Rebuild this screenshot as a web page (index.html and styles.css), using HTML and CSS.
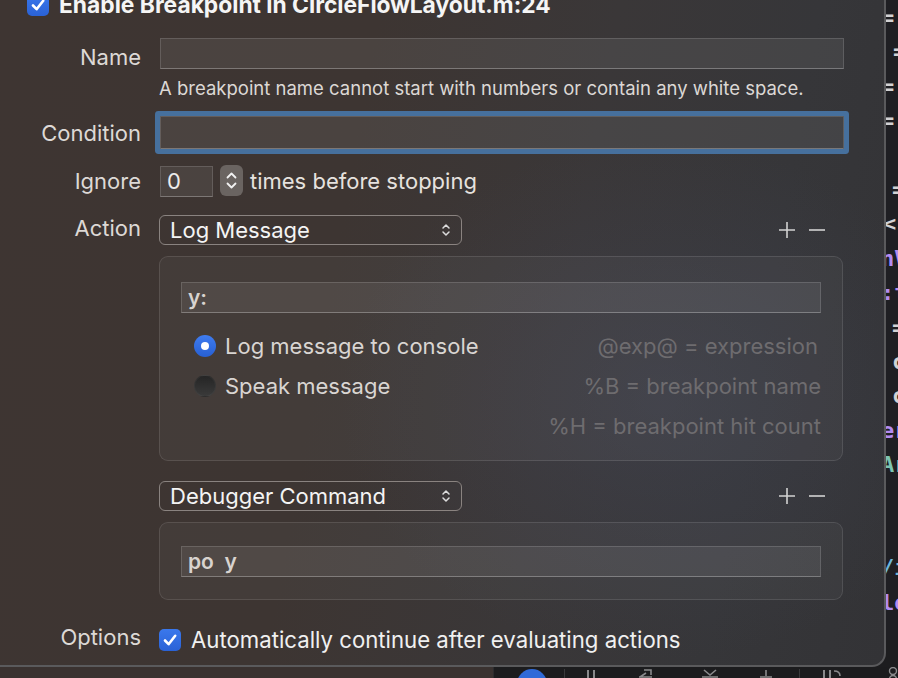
FILE: index.html
```html
<!DOCTYPE html>
<html>
<head>
<meta charset="utf-8">
<link rel="stylesheet" href="styles.css">
</head>
<body>
<div class="screen">
  <div class="main">
    <section class="panel">
      <div class="title-row">
        <span class="checkbox"><svg viewBox="0 0 22 22" width="22" height="22"><path d="M6 11.5 L9.6 15.2 L16.2 6.8" fill="none" stroke="#fff" stroke-width="2.6" stroke-linecap="round" stroke-linejoin="round"/></svg></span>
        <span class="title">Enable Breakpoint in CircleFlowLayout.m:24</span>
      </div>

      <div class="row row-name">
        <div class="label label-name">Name</div>
        <div class="ctrl">
          <div class="field"></div>
          <div class="help">A breakpoint name cannot start with numbers or contain any white space.</div>
        </div>
      </div>

      <div class="row row-condition">
        <div class="label label-condition">Condition</div>
        <div class="ctrl">
          <div class="field field-focus"></div>
        </div>
      </div>

      <div class="row row-ignore">
        <div class="label">Ignore</div>
        <div class="ctrl ctrl-inline">
          <div class="field field-small">0</div>
          <div class="stepper"><svg viewBox="0 0 23 31" width="23" height="31"><path d="M7.5 12.5 L11.5 8.5 L15.5 12.5 M7.5 18.5 L11.5 22.5 L15.5 18.5" fill="none" stroke="#f2f2f2" stroke-width="1.8" stroke-linecap="round" stroke-linejoin="round"/></svg></div>
          <span class="text">times before stopping</span>
        </div>
      </div>

      <div class="row row-action">
        <div class="label label-action">Action</div>
        <div class="ctrl">
          <div class="action-head">
            <div class="popup"><span>Log Message</span><svg viewBox="0 0 10 18" width="10" height="18"><path d="M2 7 L5 4 L8 7 M2 11 L5 14 L8 11" fill="none" stroke="#dcdcdc" stroke-width="1.5" stroke-linecap="round" stroke-linejoin="round"/></svg></div>
            <div class="pm">
              <svg viewBox="0 0 18 18" width="18" height="18"><path d="M9 1 V17 M1 9 H17" stroke="#d2d2d2" stroke-width="1.6"/></svg>
              <svg viewBox="0 0 18 18" width="18" height="18"><path d="M1 9 H17" stroke="#d2d2d2" stroke-width="1.6"/></svg>
            </div>
          </div>

          <div class="group group-log">
            <div class="field field-inner"><span class="code">y:</span></div>
            <div class="opts">
              <div class="opt-row">
                <span class="radio radio-on"><span class="dot"></span></span>
                <span class="opt-text">Log message to console</span>
                <span class="hint hint-a">@exp@ = expression</span>
              </div>
              <div class="opt-row">
                <span class="radio radio-off"></span>
                <span class="opt-text">Speak message</span>
                <span class="hint">%B = breakpoint name</span>
              </div>
              <div class="opt-row">
                <span class="hint">%H = breakpoint hit count</span>
              </div>
            </div>
          </div>

          <div class="action-head action-head-2">
            <div class="popup"><span>Debugger Command</span><svg viewBox="0 0 10 18" width="10" height="18"><path d="M2 7 L5 4 L8 7 M2 11 L5 14 L8 11" fill="none" stroke="#dcdcdc" stroke-width="1.5" stroke-linecap="round" stroke-linejoin="round"/></svg></div>
            <div class="pm">
              <svg viewBox="0 0 18 18" width="18" height="18"><path d="M9 1 V17 M1 9 H17" stroke="#d2d2d2" stroke-width="1.6"/></svg>
              <svg viewBox="0 0 18 18" width="18" height="18"><path d="M1 9 H17" stroke="#d2d2d2" stroke-width="1.6"/></svg>
            </div>
          </div>

          <div class="group group-cmd">
            <div class="field field-inner"><span class="code">po&nbsp;&nbsp;y</span></div>
          </div>
        </div>
      </div>

      <div class="row row-options">
        <div class="label">Options</div>
        <div class="ctrl ctrl-inline ctrl-options">
          <span class="checkbox"><svg viewBox="0 0 22 22" width="22" height="22"><path d="M6 11.5 L9.6 15.2 L16.2 6.8" fill="none" stroke="#fff" stroke-width="2.6" stroke-linecap="round" stroke-linejoin="round"/></svg></span>
          <span class="text text-opt">Automatically continue after evaluating actions</span>
        </div>
      </div>
    </section>

    <div class="editor">
      <div class="ln i0 w">=</div>
      <div class="ln i8 w">=</div>
      <div class="ln i0 w">=</div>
      <div class="ln i0 w">=</div>
      <div class="ln">&nbsp;</div>
      <div class="ln i7 w">=</div>
      <div class="ln i1 w">&lt;</div>
      <div class="ln i0 p">nV</div>
      <div class="ln i0 p">:t</div>
      <div class="ln i7 w">=</div>
      <div class="ln i7 w">c</div>
      <div class="ln i7 w">c</div>
      <div class="ln i0 p">er</div>
      <div class="ln i0 t">Ar</div>
      <div class="ln">&nbsp;</div>
      <div class="ln">&nbsp;</div>
      <div class="ln i0 b">/i</div>
      <div class="ln i0 p">le</div>
    </div>
  </div>

  <div class="toolbar">
    <div class="tb-left"></div>
    <div class="tb-right">
      <svg viewBox="0 0 405 11" width="405" height="11">
        <circle cx="38" cy="17" r="15" fill="#2f6ad8"/>
        <rect x="70" y="2" width="1" height="9" fill="#3a3a3c"/>
        <rect x="93" y="3" width="2" height="8" fill="#8a8a8c"/>
        <rect x="99" y="3" width="2" height="8" fill="#8a8a8c"/>
        <path d="M146 10 L152 6 M150 3 L157 3 L157 8 M145 10 H158" stroke="#8a8a8c" stroke-width="1.6" fill="none"/>
        <path d="M210 3 L216 8 L222 3 M208 10 H224" stroke="#8a8a8c" stroke-width="1.6" fill="none"/>
        <path d="M272 3 V9 M266 10 H278" stroke="#8a8a8c" stroke-width="1.6" fill="none"/>
        <rect x="305" y="2" width="1" height="9" fill="#3a3a3c"/>
        <rect x="329" y="3" width="2" height="8" fill="#8a8a8c"/>
        <rect x="335" y="3" width="2" height="8" fill="#8a8a8c"/>
        <path d="M340 4 Q346 4 346 9" stroke="#8a8a8c" stroke-width="1.6" fill="none"/>
        <circle cx="399" cy="4" r="3.5" stroke="#8a8a8c" stroke-width="1.4" fill="none"/>
        <circle cx="399" cy="12" r="3.5" stroke="#8a8a8c" stroke-width="1.4" fill="none"/>
      </svg>
    </div>
  </div>
</div>
</body>
</html>
```

FILE: styles.css
```css
* { box-sizing: border-box; }
html, body { margin: 0; padding: 0; }
body {
  width: 898px;
  height: 678px;
  overflow: hidden;
  background: #1d1d1f;
  font-family: Inter, "Noto Sans", sans-serif;
}
.screen {
  width: 898px;
  height: 678px;
  overflow: hidden;
  display: flex;
  flex-direction: column;
}
.main {
  display: flex;
  height: 667px;
  flex: none;
  background: #1d1d1f;
}
.panel {
  width: 886px;
  height: 667px;
  flex: none;
  border-right: 2px solid #5a5a5c;
  border-bottom: 2px solid #5a5a5c;
  border-bottom-right-radius: 14px;
  overflow: hidden;
  background:
    radial-gradient(ellipse 320px 260px at 660px 400px, rgba(70, 75, 95, 0.35), rgba(70, 75, 95, 0) 100%),
    linear-gradient(100deg, #3e3532 0%, #3d3532 38%, #3a3738 62%, #363639 82%, #333336 100%);
}

/* title */
.title-row {
  display: flex;
  align-items: center;
  gap: 10px;
  height: 22px;
  margin-top: -6px;
  padding-left: 27px;
}
.checkbox {
  width: 22px;
  height: 22px;
  flex: none;
  border-radius: 5px;
  background: linear-gradient(#3a78ec, #2a62d6);
  display: flex;
}
.title {
  font-size: 22.8px;
  font-weight: 700;
  color: #f5f5f5;
  line-height: 22px;
  white-space: nowrap;
}

/* rows */
.row {
  display: flex;
  align-items: flex-start;
}
.label {
  width: 141px;
  flex: none;
  text-align: right;
  font-size: 22px;
  line-height: 31px;
  color: #ddd9d6;
  white-space: nowrap;
}
.ctrl {
  margin-left: 18px;
  width: 685px;
  flex: none;
}
.ctrl-inline {
  display: flex;
  align-items: center;
}
.row-name { margin-top: 22px; }
.label-name { margin-top: 4px; }
.row-condition { margin-top: 17px; }
.label-condition { margin-top: 2px; }
.row-ignore { margin-top: 17px; }
.row-action { margin-top: 18px; }
.label-action { margin-top: -2px; }
.row-options { margin-top: 22px; }
.ctrl-options { margin-top: 2px; height: 31px; }

/* fields */
.field {
  height: 31px;
  width: 684px;
  margin-left: 1px;
  background: rgba(255, 255, 255, 0.07);
  border: 1px solid rgba(255, 255, 255, 0.14);
  border-bottom-color: rgba(255, 255, 255, 0.28);
  color: #ececec;
  font-size: 22px;
  line-height: 29px;
  padding-left: 6px;
}
.field-focus {
  height: 33px;
  box-shadow: 0 0 0 5px #46709d;
  border-radius: 1px;
}
.field-small {
  width: 53px;
  font-size: 22px;
}
.help {
  margin-top: 8px;
  font-size: 18.5px;
  line-height: 22px;
  color: #dcd8d5;
  white-space: nowrap;
}
.stepper {
  width: 23px;
  height: 31px;
  margin-left: 7px;
  margin-top: -2px;
  border-radius: 6px;
  background: #6a6461;
  display: flex;
}
.text {
  font-size: 22px;
  line-height: 31px;
  color: #e6e2df;
  margin-left: 7px;
  white-space: nowrap;
}
.text-opt {
  margin-left: 10px;
  font-size: 22.2px;
  color: #f0f0f0;
}

/* action */
.action-head {
  display: flex;
  align-items: center;
  justify-content: space-between;
  padding-right: 18px;
}
.action-head-2 { margin-top: 20px; }
.popup {
  width: 303px;
  height: 30px;
  border: 1.5px solid #8a8380;
  border-radius: 6px;
  display: flex;
  align-items: center;
  justify-content: space-between;
  padding: 0 10px 0 10px;
  font-size: 22px;
  color: #f4f4f4;
  white-space: nowrap;
}
.pm {
  display: flex;
  gap: 12px;
}
.group {
  margin-top: 11px;
  width: 684px;
  border: 1px solid rgba(255, 255, 255, 0.11);
  border-radius: 9px;
  background: rgba(255, 255, 255, 0.035);
  padding: 25px 21px 0 21px;
}
.group-log { height: 205px; }
.group-cmd { height: 78px; padding-top: 23px; }
.field-inner {
  width: 640px;
  margin-left: 0;
}
.code {
  font-size: 21px;
  font-weight: 600;
  color: #d8d3cf;
}
.opts {
  margin-top: 13px;
  padding-left: 13px;
}
.opt-row {
  height: 40px;
  display: flex;
  align-items: center;
}
.radio {
  width: 22px;
  height: 22px;
  border-radius: 50%;
  flex: none;
  display: flex;
  align-items: center;
  justify-content: center;
}
.radio-on { background: linear-gradient(#3f7cf0, #2760d4); }
.radio-on .dot {
  width: 8px;
  height: 8px;
  border-radius: 50%;
  background: #fff;
}
.radio-off {
  background: linear-gradient(#252525, #3a3a3a);
  border: 1px solid rgba(255, 255, 255, 0.04);
}
.opt-text {
  margin-left: 9px;
  font-size: 22px;
  color: #d9d5d2;
  white-space: nowrap;
}
.hint {
  margin-left: auto;
  font-size: 22px;
  color: #6e6c6f;
  white-space: nowrap;
}
.hint-a { margin-right: 3px; }

/* editor behind */
.editor {
  width: 12px;
  flex: none;
  height: 640px;
  background: #1f1f23;
  overflow: hidden;
  padding-top: 1px;
  font-family: "DejaVu Sans Mono", monospace;
  font-size: 22px;
  font-weight: 700;
}
.ln {
  height: 34.4px;
  line-height: 34.4px;
  white-space: nowrap;
}
.i0 { margin-left: -5px; }
.i1 { margin-left: -3px; }
.i7 { margin-left: 6px; }
.i8 { margin-left: 7px; }
.w { color: #d2d2d4; }
.p { color: #b38cf2; }
.t { color: #7cc5b3; }
.b { color: #6cb6dc; }

/* toolbar under the popover */
.toolbar {
  height: 11px;
  display: flex;
  flex: none;
}
.tb-left {
  width: 493px;
  background: #3a3230;
}
.tb-right {
  width: 405px;
  background: #1c1c1e;
  border-left: 1px solid #2c2c2e;
  overflow: hidden;
}
.tb-right svg { display: block; }
```
